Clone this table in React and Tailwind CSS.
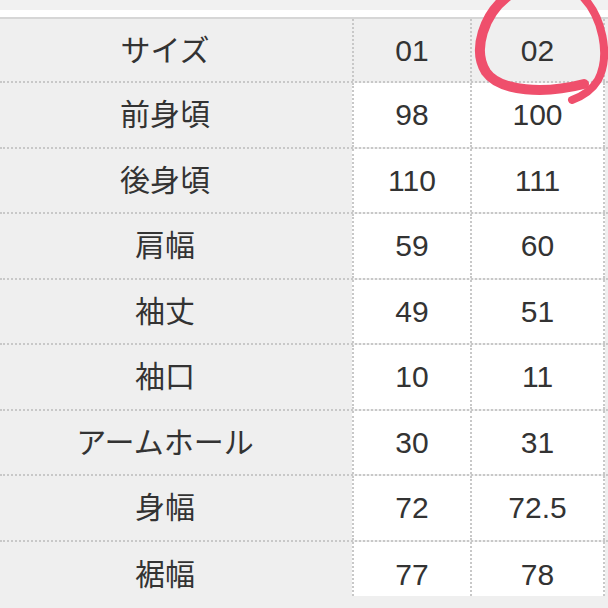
export default function App() {
  const rows = [
    ["前身頃", "98", "100"],
    ["後身頃", "110", "111"],
    ["肩幅", "59", "60"],
    ["袖丈", "49", "51"],
    ["袖口", "10", "11"],
    ["アームホール", "30", "31"],
    ["身幅", "72", "72.5"],
    ["裾幅", "77", "78"],
  ];
  const font = { fontFamily: '"Liberation Sans", "Noto Sans CJK JP", sans-serif' };
  return (
    <div className="relative w-[608px] h-[608px] overflow-hidden bg-[#efefef] text-[#333333]" style={font}>
      <div className="h-[10px] bg-[#f1f1f1]" />
      <div className="h-[7px] bg-white" />
      <div className="h-[2px] bg-[#d6d6d6]" />
      <div className="flex flex-col">
        <div className="flex h-[64px] border-b-2 border-dotted border-[#c8c8c8] text-[30px]">
          <div className="w-[352px] pr-[22px] flex items-center justify-center">サイズ</div>
          <div className="w-[118px] flex items-center justify-center border-l-2 border-dotted border-[#c8c8c8]">01</div>
          <div className="w-[135px] flex items-center justify-center border-l-2 border-r-2 border-dotted border-[#c8c8c8]">02</div>
        </div>
        {rows.map((r, i) => {
          const last = i === rows.length - 1;
          return (
            <div
              key={i}
              className={
                last
                  ? "flex h-[54px] text-[30px]"
                  : "flex h-[65.5px] border-b-2 border-dotted border-[#c8c8c8] text-[30px]"
              }
            >
              <div className={last ? "w-[352px] pr-[22px] pt-[12px] flex items-center justify-center" : "w-[352px] pr-[22px] flex items-center justify-center"}>{r[0]}</div>
              <div className={last ? "w-[118px] pt-[12px] bg-white flex items-center justify-center border-l-2 border-dotted border-[#c8c8c8]" : "w-[118px] bg-white flex items-center justify-center border-l-2 border-dotted border-[#c8c8c8]"}>{r[1]}</div>
              <div className={last ? "w-[135px] pt-[12px] bg-white flex items-center justify-center border-l-2 border-r-2 border-dotted border-[#c8c8c8]" : "w-[135px] bg-white flex items-center justify-center border-l-2 border-r-2 border-dotted border-[#c8c8c8]"}>{r[2]}</div>
            </div>
          );
        })}
      </div>
      <svg className="absolute left-0 top-0" width="608" height="608" viewBox="0 0 608 608" fill="none">
        <path d="M508 -4 C484 14 472 50 486 72 C500 92 545 94 584 84" stroke="#ef4f6c" strokeWidth="10" strokeLinecap="round" />
        <path d="M582 -4 C602 16 611 55 598 80 C592 90 583 96 572 100" stroke="#ef4f6c" strokeWidth="8" strokeLinecap="round" />
      </svg>
    </div>
  );
}
